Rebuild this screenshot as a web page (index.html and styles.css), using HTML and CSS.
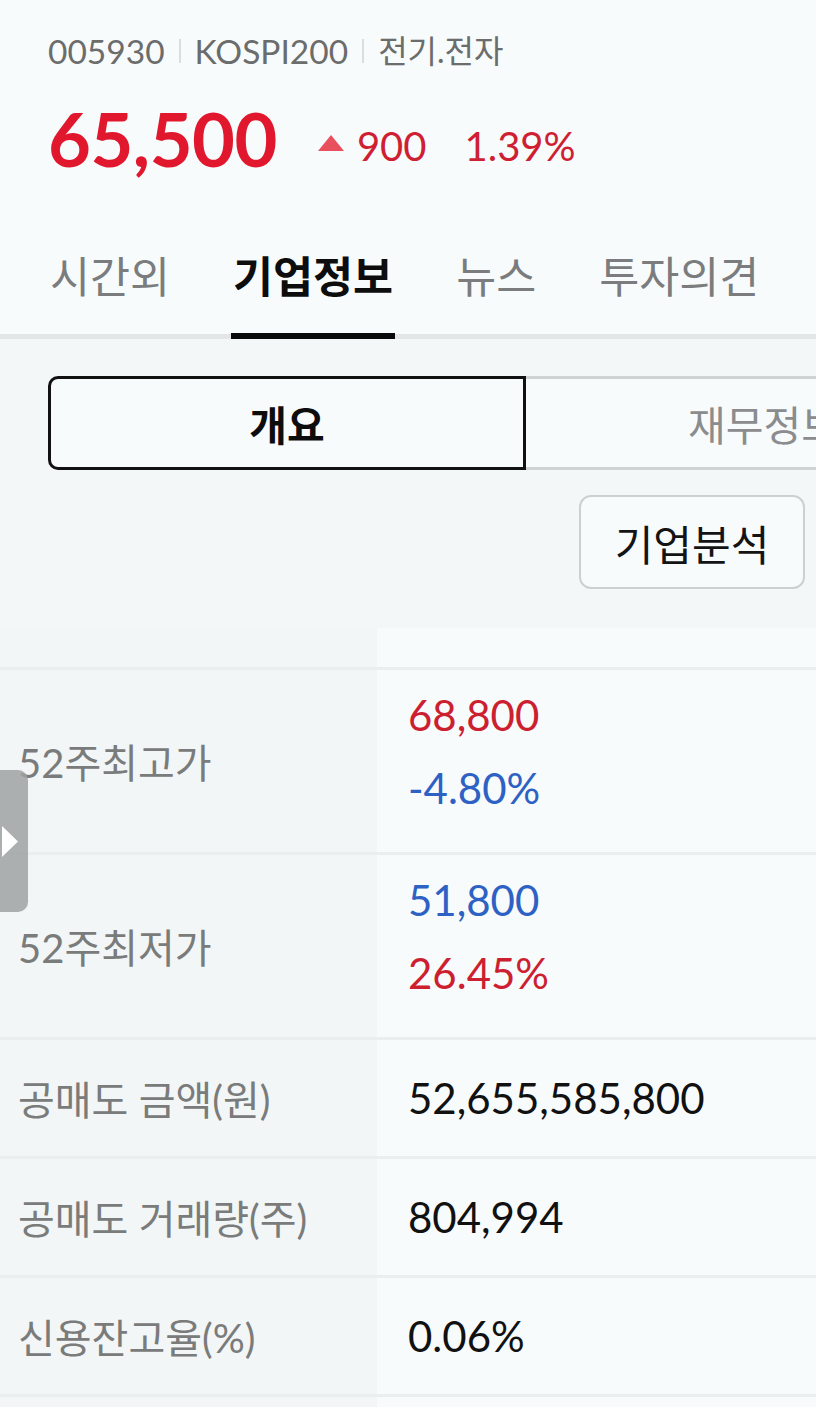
FILE: index.html
```html
<!DOCTYPE html>
<html lang="ko">
<head>
<meta charset="utf-8">
<title>삼성전자 기업정보</title>
<link rel="stylesheet" href="styles.css">
</head>
<body>
<div class="page">
  <header class="header">
    <div class="meta">
      <span>005930</span><i class="sep"></i><span>KOSPI200</span><i class="sep"></i><span class="ko">전기.전자</span>
    </div>
    <div class="price-row">
      <span class="price">65,500</span>
      <svg class="tri" width="26" height="16" viewBox="0 0 26 16"><polygon points="13,0 26,16 0,16" fill="#e8505d"/></svg>
      <span class="chg">900</span>
      <span class="chg pct">1.39%</span>
    </div>
    <nav class="tabs">
      <span class="tab">시간외</span>
      <span class="tab active">기업정보</span>
      <span class="tab">뉴스</span>
      <span class="tab">투자의견</span>
    </nav>
  </header>

  <section class="sub">
    <div class="segment">
      <div class="seg on">개요</div>
      <div class="seg">재무정보</div>
    </div>
    <div class="tools">
      <button class="btn">기업분석</button>
    </div>
  </section>

  <section class="table">
    <div class="row cut">
      <div class="label"></div>
      <div class="value"></div>
    </div>
    <div class="row tall">
      <div class="label">52주최고가</div>
      <div class="value">
        <span class="up">68,800</span>
        <span class="down">-4.80%</span>
      </div>
    </div>
    <div class="row tall">
      <div class="label">52주최저가</div>
      <div class="value">
        <span class="down">51,800</span>
        <span class="up">26.45%</span>
      </div>
    </div>
    <div class="row">
      <div class="label">공매도 금액(원)</div>
      <div class="value plain">52,655,585,800</div>
    </div>
    <div class="row">
      <div class="label">공매도 거래량(주)</div>
      <div class="value plain">804,994</div>
    </div>
    <div class="row">
      <div class="label">신용잔고율(%)</div>
      <div class="value plain">0.06%</div>
    </div>
    <div class="row">
      <div class="label"></div>
      <div class="value"></div>
    </div>
  </section>

  <div class="handle">
    <svg width="16" height="31" viewBox="0 0 16 31"><polygon points="0,0 16,15.5 0,31" fill="#ffffff"/></svg>
  </div>
</div>
</body>
</html>
```
FILE: styles.css
```css
html, body {
  margin: 0;
  padding: 0;
  background: #f4f7f7;
}

.page {
  position: relative;
  width: 816px;
  height: 1407px;
  overflow: hidden;
  background: #f4f7f7;
  font-family: Lato, "Noto Sans CJK KR", sans-serif;
  color: #111;
}

/* ---------- header ---------- */
.header {
  background: #f8fbfb;
  padding-top: 29px;
}

.meta {
  display: flex;
  align-items: center;
  height: 44px;
  margin-left: 48px;
  line-height: 44px;
  font-size: 33.5px;
  color: #6b6c6c;
}

.meta .ko {
  font-size: 32px;
}

.sep {
  display: block;
  width: 2px;
  height: 24px;
  margin: 0 14px;
  background: #dcdede;
}

.price-row {
  display: flex;
  align-items: flex-end;
  height: 80px;
  margin: 26px 0 0 48px;
}

.price {
  font-size: 74px;
  line-height: 80px;
  font-weight: 700;
  color: #e1182d;
  letter-spacing: -0.5px;
}

.tri {
  margin: 0 13px 28px 41px;
}

.chg {
  font-size: 40px;
  line-height: 48px;
  margin-bottom: 9px;
  color: #cf1f33;
}

.pct {
  margin-left: 38px;
}

.tabs {
  display: flex;
  gap: 59px;
  margin-top: 68px;
  padding-left: 48px;
  border-bottom: 5px solid #e3e6e7;
}

.tab {
  font-family: "Noto Sans CJK KR", sans-serif;
  font-size: 43.5px;
  line-height: 56px;
  padding: 0 2px 30px;
  border-bottom: 6px solid transparent;
  margin-bottom: -5px;
  color: #7a7c7e;
}

.tab.active {
  color: #0d0d0d;
  font-weight: 700;
  border-bottom-color: #0a0a0a;
}

/* ---------- sub nav ---------- */
.sub {
  padding: 37px 11px 0 48px;
}

.segment {
  display: flex;
  width: 956px;
}

.seg {
  box-sizing: border-box;
  width: 478px;
  height: 94px;
  display: flex;
  align-items: center;
  justify-content: center;
  font-family: "Noto Sans CJK KR", sans-serif;
  font-size: 41px;
  color: #8a8c8d;
  background: #f8fbfb;
  border: 3px solid #d0d3d4;
  border-left: none;
  border-radius: 0 10px 10px 0;
}

.seg.on {
  border: 3px solid #111;
  border-radius: 10px 0 0 10px;
  color: #0d0d0d;
  font-weight: 700;
}

.tools {
  display: flex;
  justify-content: flex-end;
  margin-top: 25px;
}

.btn {
  box-sizing: border-box;
  width: 226px;
  height: 94px;
  padding: 0;
  display: flex;
  align-items: center;
  justify-content: center;
  background: #f8fbfb;
  border: 2px solid #cdd0d1;
  border-radius: 12px;
  font-family: "Noto Sans CJK KR", sans-serif;
  font-size: 42px;
  color: #141414;
}

/* ---------- table ---------- */
.table {
  margin-top: 39px;
  overflow: hidden;
}

.row {
  display: flex;
  height: 116px;
  border-bottom: 3px solid #eaeeee;
}

.row.cut {
  height: 39px;
}

.row.tall {
  height: 182px;
}

.label {
  box-sizing: border-box;
  width: 377px;
  flex: none;
  display: flex;
  align-items: center;
  padding-left: 18px;
  background: #f2f6f6;
  font-size: 40px;
  color: #7a7b7b;
}

.value {
  flex: 1;
  display: flex;
  flex-direction: column;
  justify-content: center;
  padding-left: 31px;
  background: #f8fbfb;
  font-size: 42px;
}

.row.tall .value {
  padding-bottom: 18px;
  line-height: 73px;
}

.value.plain {
  color: #111;
}

.up {
  color: #cc2030;
}

.down {
  color: #2d61c4;
}

/* ---------- side handle (overlay) ---------- */
.handle {
  position: absolute;
  left: 0;
  top: 770px;
  width: 28px;
  height: 142px;
  box-sizing: border-box;
  padding: 56px 0 0 2px;
  background: rgba(160, 162, 162, 0.85);
  border-radius: 0 10px 10px 0;
}

.handle svg {
  display: block;
}
```
